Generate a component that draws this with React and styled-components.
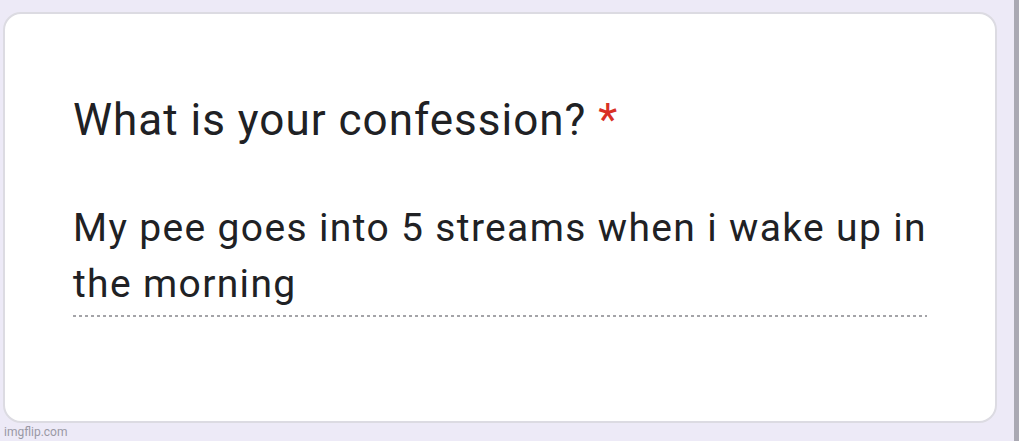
import React from "react";
import styled, { createGlobalStyle } from "styled-components";

const GlobalStyle = createGlobalStyle`
  html, body {
    margin: 0;
    padding: 0;
    background: #edeaf7;
    font-family: Roboto, "Liberation Sans", sans-serif;
  }
`;

const Page = styled.div`
  display: flex;
  width: 1019px;
  height: 441px;
  overflow: hidden;
`;

const Main = styled.div`
  flex: 1;
  min-width: 0;
  display: flex;
  flex-direction: column;
  padding: 12px 17px 0 3px;
`;

const Scrollbar = styled.div`
  flex-shrink: 0;
  width: 5px;
  background: #aaa9b3;
`;

const Card = styled.div`
  height: 411px;
  box-sizing: border-box;
  background: #ffffff;
  border: 2px solid #dcdbe2;
  border-radius: 18px;
  padding: 78px 68px 0 68px;
`;

const Question = styled.h2`
  margin: 0;
  font-weight: 400;
  font-size: 44px;
  line-height: 56px;
  letter-spacing: 1px;
  color: #202124;
`;

const Required = styled.span`
  color: #d93025;
  margin-left: 12px;
`;

const Answer = styled.p`
  margin: 52px 0 0;
  font-size: 39px;
  line-height: 56px;
  letter-spacing: 1.35px;
  color: #202124;
`;

const Underline = styled.div`
  margin-top: 3px;
  width: 854px;
  height: 2px;
  background-image: repeating-linear-gradient(
    to right,
    #a4a4a8 0 3px,
    transparent 3px 6px
  );
`;

const Footer = styled.div`
  padding: 2px 0 0 1px;
  font-size: 12px;
  color: #9a99a5;
`;

function App() {
  return (
    <Page>
      <GlobalStyle />
      <Main>
        <Card>
          <Question>
            What is your confession?<Required>*</Required>
          </Question>
          <Answer>
            My pee goes into 5 streams when i wake up in the morning
          </Answer>
          <Underline />
        </Card>
        <Footer>imgflip.com</Footer>
      </Main>
      <Scrollbar />
    </Page>
  );
}

export default App;
